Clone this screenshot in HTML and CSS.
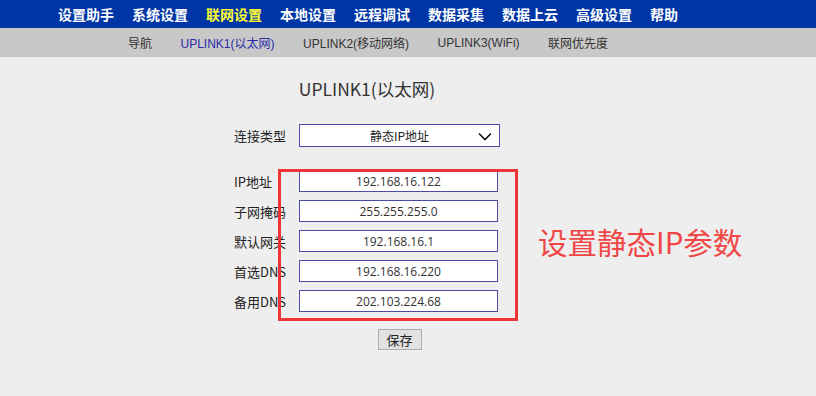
FILE: index.html
```html
<!DOCTYPE html>
<html>
<head>
    <title>UPLINK1(以太网)</title>
    <meta charset="UTF-8">
    <link rel="stylesheet" href="styles.css">
</head>
<body>
    <div class="topnav">
        <a>设置助手</a>
        <a>系统设置</a>
        <a class="active">联网设置</a>
        <a>本地设置</a>
        <a>远程调试</a>
        <a>数据采集</a>
        <a>数据上云</a>
        <a>高级设置</a>
        <a>帮助</a>
    </div>
    <div class="subnav">
        <a>导航</a>
        <a class="current">UPLINK1(以太网)</a>
        <a>UPLINK2(移动网络)</a>
        <a>UPLINK3(WiFi)</a>
        <a>联网优先度</a>
    </div>

    <div class="main">
        <div class="form">
            <h1>UPLINK1(以太网)</h1>

            <div class="row type-row">
                <label>连接类型</label>
                <div class="select">
                    <span>静态IP地址</span>
                    <svg class="chev" width="14" height="9" viewBox="0 0 14 9">
                        <path d="M1 1.5 L7 7.5 L13 1.5" fill="none" stroke="#111" stroke-width="1.6"/>
                    </svg>
                </div>
            </div>

            <div class="fields">
                <div class="row">
                    <label>IP地址</label>
                    <input type="text" value="192.168.16.122">
                </div>
                <div class="row">
                    <label>子网掩码</label>
                    <input type="text" value="255.255.255.0">
                </div>
                <div class="row">
                    <label>默认网关</label>
                    <input type="text" value="192.168.16.1">
                </div>
                <div class="row">
                    <label>首选DNS</label>
                    <input type="text" value="192.168.16.220">
                </div>
                <div class="row">
                    <label>备用DNS</label>
                    <input type="text" value="202.103.224.68">
                </div>
                <div class="mark"></div>
                <div class="note">设置静态IP参数</div>
            </div>

            <div class="actions">
                <button>保存</button>
            </div>
        </div>
    </div>
</body>
</html>
```

FILE: styles.css
```css
body {
    margin: 0;
    background-color: #eeeeee;
    font-family: "Noto Sans CJK SC", "Noto Sans", sans-serif;
    color: #333;
}
.topnav {
    background: #0035a6;
    height: 28px;
    display: flex;
    align-items: center;
    padding-left: 58px;
    gap: 18px;
}
.topnav a {
    color: #fff;
    font-size: 14px;
    font-weight: bold;
    line-height: 28px;
}
.topnav a.active { color: #ffff33; }
.subnav {
    background: #c8c8c8;
    height: 29px;
    display: flex;
    align-items: center;
    padding-left: 128px;
    gap: 28.5px;
    font-size: 12px;
    font-family: "Liberation Sans", "Noto Sans CJK SC", sans-serif;
}
.subnav a { color: #333; }
.subnav a.current { color: #2b2ba8; }

.main { padding-top: 20px; }
.form {
    width: 266px;
    margin-left: 234px;
}
h1 {
    font-size: 17.5px;
    font-weight: normal;
    text-align: center;
    margin: 0 0 23px 0;
    line-height: 24px;
}
.row {
    display: flex;
    align-items: center;
    height: 22px;
    margin-bottom: 8px;
}
.row label {
    width: 65px;
    font-size: 13px;
    color: #222;
}
.type-row { height: 23px; margin-bottom: 23px; }
.select {
    width: 199px;
    height: 21px;
    border: 1px solid #4b4ba8;
    background: #fff;
    position: relative;
    display: flex;
    align-items: center;
    justify-content: center;
    font-size: 12px;
    color: #222;
}
.chev { position: absolute; right: 7px; top: 7px; }
.row input {
    width: 199px;
    height: 22px;
    box-sizing: border-box;
    border: 1px solid #4b4ba8;
    background: #fff;
    text-align: center;
    font-family: "Open Sans", sans-serif;
    font-size: 12px;
    color: #333;
    padding: 0;
}
.fields { position: relative; }
.mark {
    position: absolute;
    left: 44px;
    top: -1px;
    width: 234px;
    height: 146px;
    border: 3px solid #ee3434;
}
.note {
    position: absolute;
    left: 304px;
    top: 50px;
    white-space: nowrap;
    font-size: 29.5px;
    color: #f04646;
}
.actions {
    text-align: center;
    padding-left: 65px;
    margin-top: 14px;
}
button {
    font-family: "Noto Sans CJK SC", sans-serif;
    font-size: 13px;
    color: #222;
    background: #e1e1e1;
    border: 1px solid #adadad;
    width: 44px;
    height: 21px;
    padding: 0;
    line-height: 19px;
}
```
